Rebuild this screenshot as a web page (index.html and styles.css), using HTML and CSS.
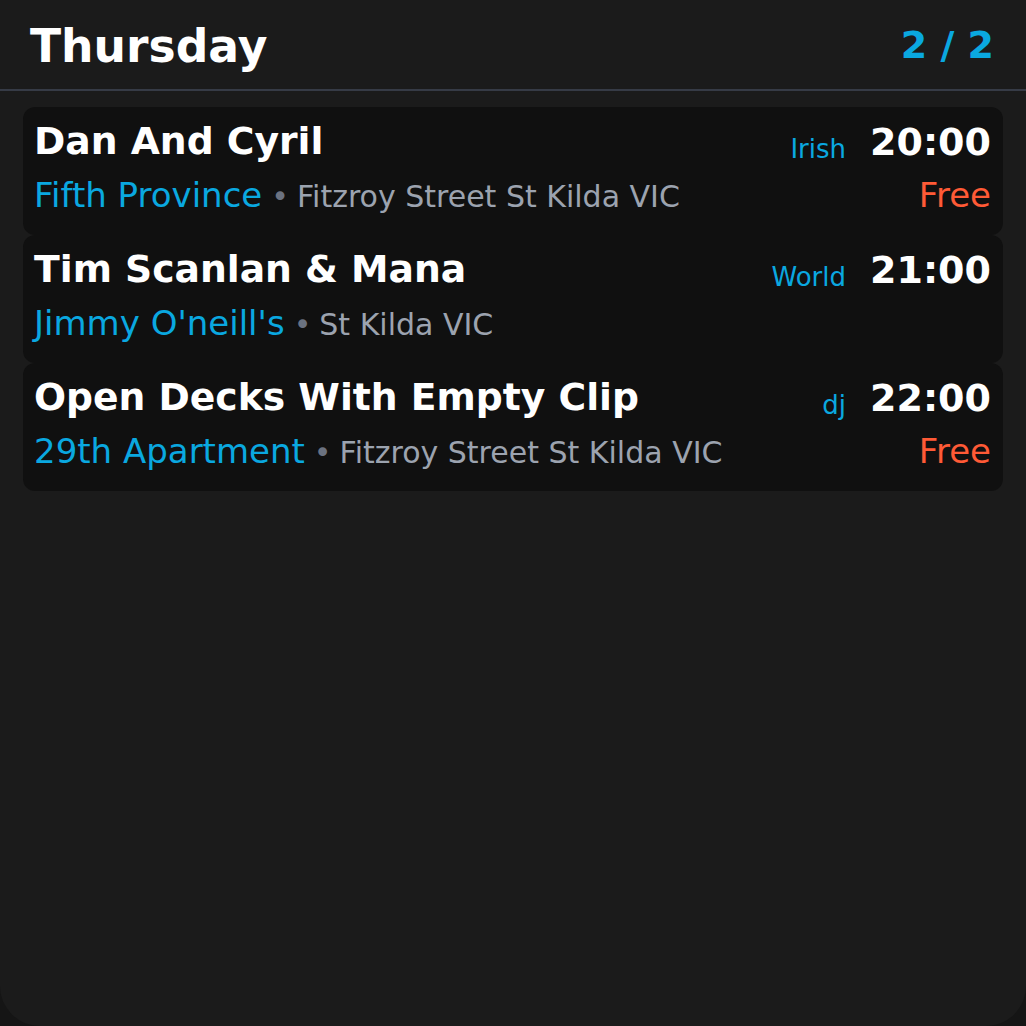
FILE: index.html
```html
<!DOCTYPE html>
<html lang="en">
<head>
<meta charset="utf-8">
<title>Thursday</title>
<link rel="stylesheet" href="styles.css">
</head>
<body>
<div class="screen">
  <header class="header">
    <h1 class="day">Thursday</h1>
    <div class="page">2 / 2</div>
  </header>
  <div class="list">
    <div class="card">
      <div class="row top">
        <div class="name">Dan And Cyril</div>
        <div class="meta"><span class="tag">Irish</span><span class="time">20:00</span></div>
      </div>
      <div class="row bottom">
        <div class="place"><span class="venue">Fifth Province</span><span class="dot">•</span><span class="addr">Fitzroy Street St Kilda VIC</span></div>
        <div class="price">Free</div>
      </div>
    </div>
    <div class="card">
      <div class="row top">
        <div class="name">Tim Scanlan &amp; Mana</div>
        <div class="meta"><span class="tag">World</span><span class="time">21:00</span></div>
      </div>
      <div class="row bottom">
        <div class="place"><span class="venue">Jimmy O'neill's</span><span class="dot">•</span><span class="addr">St Kilda VIC</span></div>
        <div class="price"></div>
      </div>
    </div>
    <div class="card">
      <div class="row top">
        <div class="name">Open Decks With Empty Clip</div>
        <div class="meta"><span class="tag">dj</span><span class="time">22:00</span></div>
      </div>
      <div class="row bottom">
        <div class="place"><span class="venue">29th Apartment</span><span class="dot">•</span><span class="addr">Fitzroy Street St Kilda VIC</span></div>
        <div class="price">Free</div>
      </div>
    </div>
  </div>
</div>
</body>
</html>
```
FILE: styles.css
```css
html, body {
  margin: 0;
  padding: 0;
  background: #151515;
}
body {
  font-family: "DejaVu Sans", "Liberation Sans", sans-serif;
  color: #ffffff;
}
.screen {
  width: 1026px;
  height: 1026px;
  background: #1b1b1b;
  border-radius: 0 0 40px 40px;
  overflow: hidden;
}
.header {
  height: 89px;
  border-bottom: 2px solid #363b46;
  display: flex;
  align-items: center;
  justify-content: space-between;
  padding: 0 32px 0 30px;
  box-sizing: content-box;
}
.day {
  margin: 0;
  font-size: 45.6px;
  font-weight: 700;
  line-height: 52px;
  padding-top: 4px;
}
.page {
  font-size: 38px;
  font-weight: 700;
  color: #0aa8e0;
}
.list {
  padding: 16px 23px 0;
  display: flex;
  flex-direction: column;
}
.card {
  background: #101010;
  border-radius: 12px;
  padding: 12px 12px 14px 11px;
  height: 128px;
  box-sizing: border-box;
}
.row {
  display: flex;
  justify-content: space-between;
}
.top {
  height: 44px;
  align-items: flex-start;
}
.bottom {
  margin-top: 7px;
  height: 50px;
  line-height: 50px;
  align-items: baseline;
}
.name {
  font-size: 37.7px;
  line-height: 44px;
  font-weight: 700;
  white-space: nowrap;
}
.meta {
  display: flex;
  align-items: flex-end;
  gap: 24px;
  margin-top: 1px;
  line-height: normal;
}
.tag {
  font-size: 26px;
  color: #0aa8e0;
}
.time {
  font-size: 38px;
  font-weight: 700;
}
.place {
  white-space: nowrap;
}
.venue {
  font-size: 34px;
  color: #0aa8e0;
}
.dot {
  font-size: 30px;
  color: #6b7280;
  margin: 0 8px 0 9px;
}
.addr {
  font-size: 30px;
  color: #9ca3af;
}
.price {
  font-size: 34px;
  color: #ff5a36;
}
```
